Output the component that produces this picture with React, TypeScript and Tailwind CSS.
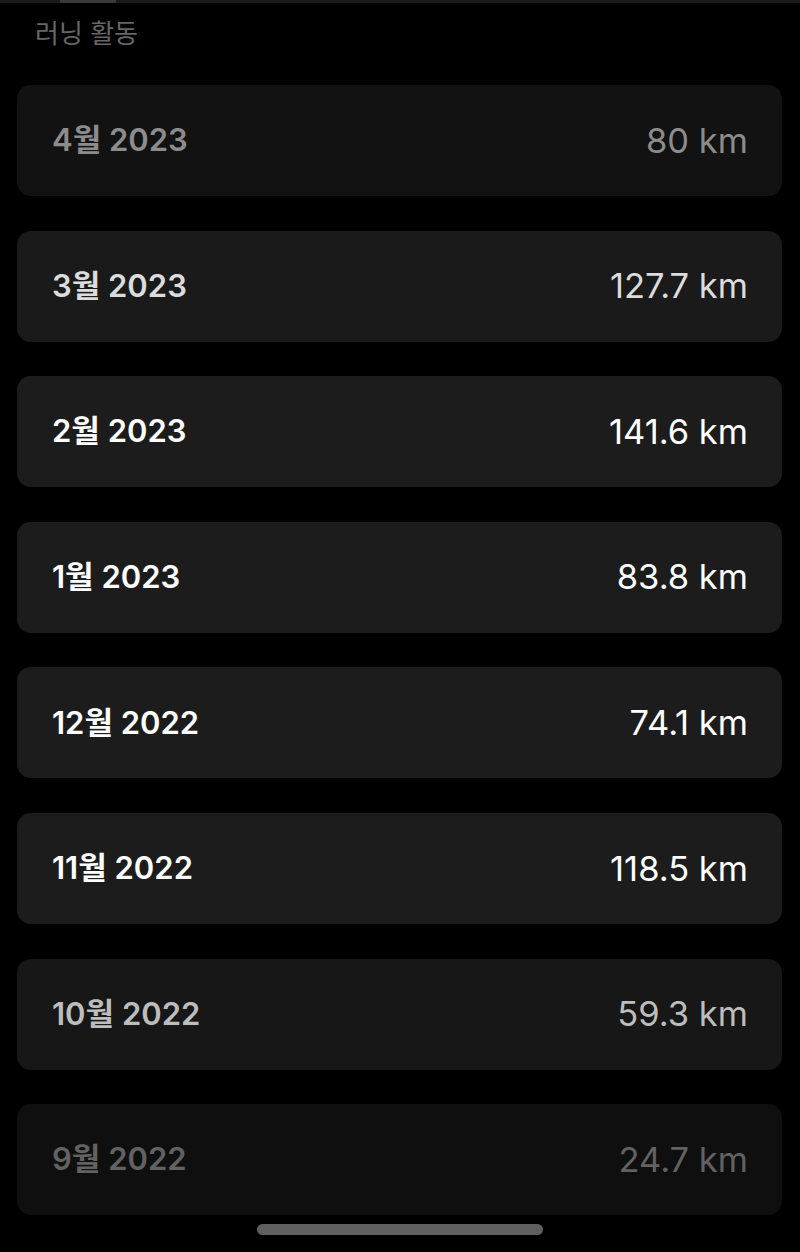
type MonthRow = {
  label: string
  distance: string
  card: string
  text: string
}

const rows: MonthRow[] = [
  { label: "4월 2023", distance: "80 km", card: "bg-[#121212]", text: "text-[#8c8c8c]" },
  { label: "3월 2023", distance: "127.7 km", card: "bg-[#1a1a1a]", text: "text-[#dcdcdc]" },
  { label: "2월 2023", distance: "141.6 km", card: "bg-[#1c1c1c]", text: "text-white" },
  { label: "1월 2023", distance: "83.8 km", card: "bg-[#1c1c1c]", text: "text-white" },
  { label: "12월 2022", distance: "74.1 km", card: "bg-[#1c1c1c]", text: "text-white" },
  { label: "11월 2022", distance: "118.5 km", card: "bg-[#1c1c1c]", text: "text-white" },
  { label: "10월 2022", distance: "59.3 km", card: "bg-[#171717]", text: "text-[#bdbdbd]" },
  { label: "9월 2022", distance: "24.7 km", card: "bg-[#0f0f0f]", text: "text-[#626262]" },
]

function MonthCard({ label, distance, card, text }: MonthRow) {
  return (
    <div className={`${card} ${text} h-[111px] rounded-[14px] flex items-center justify-between pl-[35px] pr-[34px]`}>
      <span className="text-[31px] font-semibold">{label}</span>
      <span className="text-[34.5px] font-normal">{distance}</span>
    </div>
  )
}

export default function App() {
  return (
    <div
      className="w-[800px] h-[1252px] bg-black overflow-hidden flex flex-col"
      style={{ fontFamily: 'Inter, "Noto Sans CJK KR", sans-serif' }}
    >
      <div className="h-[3px] flex">
        <div className="w-[60px] bg-[#1a1a1a]" />
        <div className="w-[56px] bg-[#3a3a3a]" />
        <div className="flex-1 bg-[#1a1a1a]" />
      </div>
      <h2 className="pl-[35px] pt-[16px] h-[82px] text-[26px] text-[#666666] font-normal leading-[30px]">러닝 활동</h2>
      <div className="flex flex-col gap-[34.6px] px-[17px] pr-[18px]">
        {rows.map((r) => (
          <MonthCard key={r.label} {...r} />
        ))}
      </div>
      <div className="flex justify-center mt-[9px]">
        <div className="w-[286px] h-[11px] rounded-full bg-[#5f5f5f]" />
      </div>
    </div>
  )
}
